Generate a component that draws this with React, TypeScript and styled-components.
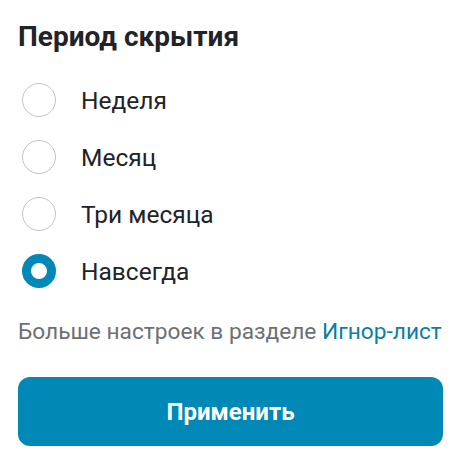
import React, { useState } from 'react'
import styled, { createGlobalStyle } from 'styled-components'

const GlobalStyle = createGlobalStyle`
	body {
		margin: 0;
		background: #ffffff;
		font-family: Roboto, 'Noto Sans', Arial, sans-serif;
	}
`

const Panel = styled.div`
	padding: 20px 22px 0 18px;
	display: flex;
	flex-direction: column;
`
const Title = styled.h2`
	margin: 0;
	font-size: 28px;
	line-height: 33px;
	font-weight: 700;
	color: #222326;
`
const Options = styled.div`
	margin-top: 30px;
	display: flex;
	flex-direction: column;
	gap: 23px;
`
const Option = styled.label`
	display: flex;
	align-items: center;
	gap: 25px;
	padding-left: 4px;
	height: 34px;
	cursor: pointer;
	font-size: 24.5px;
	color: #222326;
`
const Radio = styled.span<{ $checked: boolean }>`
	box-sizing: border-box;
	width: 34px;
	height: 34px;
	border-radius: 50%;
	flex-shrink: 0;
	border: ${p => (p.$checked ? '9px solid #0088b6' : '1px solid #c2c3c7')};
	background: #ffffff;
`
const Hint = styled.p`
	margin: 31px 0 0;
	font-size: 22.7px;
	line-height: 26px;
	color: #6d6f75;
	white-space: nowrap;
`
const HintLink = styled.a`
	color: #0a7ea8;
	text-decoration: none;
`
const ApplyButton = styled.button`
	margin-top: 32px;
	height: 69px;
	border: none;
	border-radius: 12px;
	background: #0088b6;
	color: #ffffff;
	font-family: Roboto, Arial, sans-serif;
	font-size: 24px;
	font-weight: 700;
	cursor: pointer;
`

const periods = ['Неделя', 'Месяц', 'Три месяца', 'Навсегда']

const App = () => {
	const [selected, setSelected] = useState('Навсегда')
	return (
		<>
			<GlobalStyle />
			<Panel>
				<Title>Период скрытия</Title>
				<Options>
					{periods.map(p => (
						<Option key={p} onClick={() => setSelected(p)}>
							<Radio $checked={selected === p} />
							{p}
						</Option>
					))}
				</Options>
				<Hint>
					Больше настроек в разделе <HintLink href="#">Игнор-лист</HintLink>
				</Hint>
				<ApplyButton>Применить</ApplyButton>
			</Panel>
		</>
	)
}

export default App
